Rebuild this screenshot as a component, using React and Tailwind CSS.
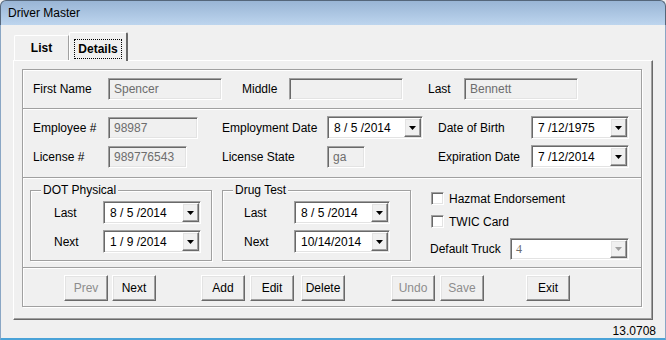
import React from "react";

// classic 3D borders
const sunken =
  "border border-t-[#a0a0a0] border-l-[#a0a0a0] border-b-white border-r-white shadow-[inset_1px_1px_0_#696969,inset_-1px_-1px_0_#e3e3e3]";
const raised =
  "border border-t-white border-l-white border-b-[#696969] border-r-[#696969] shadow-[inset_-1px_-1px_0_#a0a0a0,inset_1px_1px_0_#e3e3e3]";

function Arrow({ color = "#000" }) {
  return (
    <svg width="7" height="4" viewBox="0 0 7 4">
      <path d="M0 0h7L3.5 4z" fill={color} />
    </svg>
  );
}

function TextBox({ className, value }) {
  return (
    <div className={`${sunken} h-[22px] bg-[#f0f0f0] flex items-center pl-[5px] text-[#6d6d6d] ${className}`}>
      {value}
    </div>
  );
}

function DatePicker({ className, value }) {
  return (
    <div className={`${sunken} h-[23px] bg-white flex items-stretch p-[1px] ${className}`}>
      <span className="flex-1 flex items-center pl-[5px] whitespace-pre">{value}</span>
      <span className={`${raised} w-[17px] bg-[#f0f0f0] flex items-center justify-center`}>
        <Arrow />
      </span>
    </div>
  );
}

function CheckBox({ label }) {
  return (
    <div className="flex items-center h-[13px]">
      <span className={`${sunken} w-[13px] h-[13px] bg-white`} />
      <span className="ml-[5px]">{label}</span>
    </div>
  );
}

function GroupBox({ title, className, children }) {
  return (
    <div
      className={`relative h-[71px] border border-[#a0a0a0] shadow-[inset_1px_1px_0_#fff,1px_1px_0_#fff] flex flex-col pt-[10px] gap-[6px] ${className}`}
    >
      <span className="absolute -top-[8px] left-[10px] px-[2px] bg-[#f0f0f0] leading-[15px]">{title}</span>
      {children}
    </div>
  );
}

function Button({ label, disabled, className }) {
  return (
    <button
      className={`${raised} w-[44px] h-[26px] bg-[#f0f0f0] flex items-center justify-center ${
        disabled ? "text-[#8d8d8d]" : "text-black"
      } ${className || ""}`}
    >
      {label}
    </button>
  );
}

const Sep = () => <div className="h-[2px] shrink-0 border-t border-t-[#a0a0a0] border-b border-b-white" />;

export default function App() {
  return (
    <div className="w-[666px] h-[340px] flex flex-col bg-[#f0f0f0] text-[12px] leading-[14px] text-black font-['Liberation_Sans',Arial,sans-serif] overflow-hidden">
      {/* title bar */}
      <div className="h-[25px] shrink-0 flex items-center pl-[7px] bg-linear-to-b from-[#99b5d5] to-[#bdd5ee] border border-b-0 border-[#55667a] rounded-t-[6px]">
        Driver Master
      </div>

      <div className="flex-1 flex flex-col border-x border-x-[#8aa6c4] border-b-[3px] border-b-[#4aa3d8] pt-[7px]">
        {/* tabs */}
        <div className="flex items-end h-[28px] ml-[13px]">
          <div className="w-[55px] h-[25px] border-t border-l border-white border-r border-r-[#a0a0a0] rounded-tl-[2px] font-bold flex items-center justify-center">
            List
          </div>
          <div className="relative z-10 -mb-[1px] w-[59px] h-[29px] bg-[#f0f0f0] border-t border-l border-white border-r-2 border-r-[#696969] rounded-t-[2px] font-bold flex items-start justify-center pt-[6px]">
            <span className="border border-dotted border-black px-[3px] py-[2px]">Details</span>
          </div>
        </div>

        {/* tab pane */}
        <div className="ml-[12px] w-[640px] h-[260px] shrink-0 border border-t-white border-l-white border-r-[#696969] border-b-[#696969] shadow-[inset_-1px_-1px_0_#a0a0a0] pt-[8px] pl-[8px]">
          <div className="w-[620px] h-[238px] border border-[#a0a0a0] shadow-[inset_1px_1px_0_#fff,1px_1px_0_#fff] flex flex-col">
            {/* names */}
            <div className="h-[38px] shrink-0 flex items-center pl-[10px]">
              <span className="w-[75px]">First Name</span>
              <TextBox className="w-[114px]" value="Spencer" />
              <span className="ml-[20px] w-[47px]">Middle</span>
              <TextBox className="w-[114px]" value="" />
              <span className="ml-[25px] w-[36px]">Last</span>
              <TextBox className="w-[114px]" value="Bennett" />
            </div>
            <Sep />

            {/* employee info */}
            <div className="h-[67px] shrink-0 pl-[10px] pt-[6px] grid grid-cols-[189px_216px_1fr] auto-rows-[23px] gap-y-[6px]">
              <div className="flex items-center">
                <span className="w-[75px]">Employee #</span>
                <TextBox className="w-[90px]" value="98987" />
              </div>
              <div className="flex items-center">
                <span className="w-[105px]">Employment Date</span>
                <DatePicker className="w-[96px]" value="8 / 5 /2014" />
              </div>
              <div className="flex items-center">
                <span className="w-[93px]">Date of Birth</span>
                <DatePicker className="w-[98px]" value="7 /12/1975" />
              </div>
              <div className="flex items-center">
                <span className="w-[75px]">License #</span>
                <TextBox className="w-[79px]" value="989776543" />
              </div>
              <div className="flex items-center">
                <span className="w-[105px]">License State</span>
                <TextBox className="w-[38px]" value="ga" />
              </div>
              <div className="flex items-center">
                <span className="w-[93px]">Expiration Date</span>
                <DatePicker className="w-[98px]" value="7 /12/2014" />
              </div>
            </div>
            <Sep />

            {/* physical / drug / flags */}
            <div className="h-[88px] shrink-0 flex items-start pl-[7px] pt-[11px]">
              <GroupBox title="DOT Physical" className="w-[182px] pl-[23px]">
                <div className="flex items-center">
                  <span className="w-[49px]">Last</span>
                  <DatePicker className="w-[98px]" value="8 / 5 /2014" />
                </div>
                <div className="flex items-center">
                  <span className="w-[49px]">Next</span>
                  <DatePicker className="w-[98px]" value="1 / 9 /2014" />
                </div>
              </GroupBox>
              <GroupBox title="Drug Test" className="ml-[10px] w-[189px] pl-[21px]">
                <div className="flex items-center">
                  <span className="w-[50px]">Last</span>
                  <DatePicker className="w-[96px]" value="8 / 5 /2014" />
                </div>
                <div className="flex items-center">
                  <span className="w-[50px]">Next</span>
                  <DatePicker className="w-[96px]" value="10/14/2014" />
                </div>
              </GroupBox>
              <div className="ml-[20px] mt-[2px] flex flex-col">
                <CheckBox label="Hazmat Endorsement" />
                <div className="mt-[10px]">
                  <CheckBox label="TWIC Card" />
                </div>
                <div className="mt-[10px] -ml-[1px] flex items-center">
                  <span className="w-[80px]">Default Truck</span>
                  <div className={`${sunken} w-[119px] h-[22px] bg-white flex items-stretch p-[1px]`}>
                    <span className="flex-1 flex items-center pl-[4px] text-[#6d6d6d] font-['Liberation_Serif',serif]">4</span>
                    <span className={`${raised} w-[17px] bg-[#f0f0f0] flex items-center justify-center`}>
                      <Arrow color="#a0a0a0" />
                    </span>
                  </div>
                </div>
              </div>
            </div>
            <Sep />

            {/* buttons */}
            <div className="flex-1 flex items-start pt-[6px] pl-[41px]">
              <Button label="Prev" disabled />
              <Button label="Next" className="ml-[4px]" />
              <Button label="Add" className="ml-[45px]" />
              <Button label="Edit" className="ml-[5px]" />
              <Button label="Delete" className="ml-[7px]" />
              <Button label="Undo" disabled className="ml-[46px]" />
              <Button label="Save" disabled className="ml-[5px]" />
              <Button label="Exit" className="ml-[42px]" />
            </div>
          </div>
        </div>

        {/* status */}
        <div className="flex-1 flex items-center justify-end pr-[9px] pt-[4px]">13.0708</div>
      </div>
    </div>
  );
}
